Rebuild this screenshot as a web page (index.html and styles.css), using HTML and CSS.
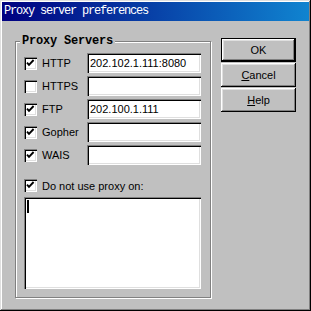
FILE: index.html
```html
<!DOCTYPE html>
<html lang="en">
<head>
    <meta charset="UTF-8">
    <title>Proxy server preferences</title>
    <link rel="stylesheet" href="styles.css">
</head>
<body>
    <div class="window">
        <div class="titlebar">Proxy server preferences</div>

        <div class="content">
            <fieldset class="group">
                <legend>Proxy Servers</legend>

                <div class="row">
                    <span class="check"><svg width="9" height="9" viewBox="0 0 9 9"><path d="M1 3.6 L3 5.8 L7.6 1" fill="none" stroke="#000" stroke-width="1.9"/></svg></span>
                    <label>HTTP</label>
                    <div class="field">202.102.1.111:8080</div>
                </div>
                <div class="row">
                    <span class="check"></span>
                    <label>HTTPS</label>
                    <div class="field"></div>
                </div>
                <div class="row">
                    <span class="check"><svg width="9" height="9" viewBox="0 0 9 9"><path d="M1 3.6 L3 5.8 L7.6 1" fill="none" stroke="#000" stroke-width="1.9"/></svg></span>
                    <label>FTP</label>
                    <div class="field">202.100.1.111</div>
                </div>
                <div class="row">
                    <span class="check"><svg width="9" height="9" viewBox="0 0 9 9"><path d="M1 3.6 L3 5.8 L7.6 1" fill="none" stroke="#000" stroke-width="1.9"/></svg></span>
                    <label>Gopher</label>
                    <div class="field"></div>
                </div>
                <div class="row">
                    <span class="check"><svg width="9" height="9" viewBox="0 0 9 9"><path d="M1 3.6 L3 5.8 L7.6 1" fill="none" stroke="#000" stroke-width="1.9"/></svg></span>
                    <label>WAIS</label>
                    <div class="field"></div>
                </div>

                <div class="row noproxy">
                    <span class="check"><svg width="9" height="9" viewBox="0 0 9 9"><path d="M1 3.6 L3 5.8 L7.6 1" fill="none" stroke="#000" stroke-width="1.9"/></svg></span>
                    <label>Do not use proxy on:</label>
                </div>
                <div class="textbox"><span class="caret"></span></div>
            </fieldset>

            <div class="buttons">
                <button class="btn default">OK</button>
                <button class="btn"><u>C</u>ancel</button>
                <button class="btn"><u>H</u>elp</button>
            </div>
        </div>
    </div>
</body>
</html>
```

FILE: styles.css
```css
body { margin: 0; font-family: "Liberation Sans", Arial, sans-serif; font-size: 11px; }
.window { width: 311px; height: 311px; box-sizing: border-box; padding: 2px; background: #c0c0c0;
    box-shadow: inset -1px -1px #000, inset 1px 1px #dfdfdf, inset -2px -2px #808080, inset 2px 2px #fff; }
.titlebar { height: 19px; line-height: 19px; padding-left: 2px; color: #fff;
    background: linear-gradient(to right, #000080, #1084d0);
    font-family: "Liberation Mono", monospace; font-size: 12px; letter-spacing: -1.2px; }
.content { display: flex; padding: 13px 0 0 13px; }

.group { margin: 0; padding: 5px 8px 8px 8px; width: 196px; height: 264px; box-sizing: border-box; min-width: 0;
    border: 1px solid #808080; box-shadow: inset 1px 1px #fff, 1px 1px #fff; }
.group legend { margin-left: -4px; padding: 0 2px; background: #c0c0c0; line-height: 14px;
    font-family: "Liberation Mono", monospace; font-size: 12px; font-weight: bold; letter-spacing: -0.2px; }

.row { display: flex; align-items: center; height: 20px; margin-bottom: 3px; }
.row label { margin-left: 5px; width: 45px; }
.check { width: 13px; height: 13px; box-sizing: border-box; padding: 2px; background: #fff; flex: none;
    box-shadow: inset 1px 1px #808080, inset 2px 2px #000, inset -1px -1px #fff, inset -2px -2px #dfdfdf; }
.check svg { display: block; }
.field { width: 114px; height: 20px; box-sizing: border-box; padding: 0 0 0 3px; line-height: 20px; background: #fff;
    box-shadow: inset 1px 1px #808080, inset 2px 2px #000, inset -1px -1px #fff, inset -2px -2px #dfdfdf; }

.noproxy { height: 13px; margin: 14px 0 5px 0; }
.noproxy label { width: auto; }
.textbox { width: 177px; height: 92px; box-sizing: border-box; padding: 3px; background: #fff;
    box-shadow: inset 1px 1px #808080, inset 2px 2px #000, inset -1px -1px #fff, inset -2px -2px #dfdfdf; }
.caret { display: block; width: 2px; height: 13px; background: #000; }

.buttons { display: flex; flex-direction: column; gap: 1px; margin: 4px 0 0 10px; }
.btn { width: 75px; height: 24px; padding: 0; border: none; background: #c0c0c0; color: #000;
    font-family: "Liberation Sans", Arial, sans-serif; font-size: 11px;
    box-shadow: inset -1px -1px #000, inset 1px 1px #fff, inset -2px -2px #808080, inset 2px 2px #dfdfdf; }
.btn.default { border: 1px solid #000; }
```
